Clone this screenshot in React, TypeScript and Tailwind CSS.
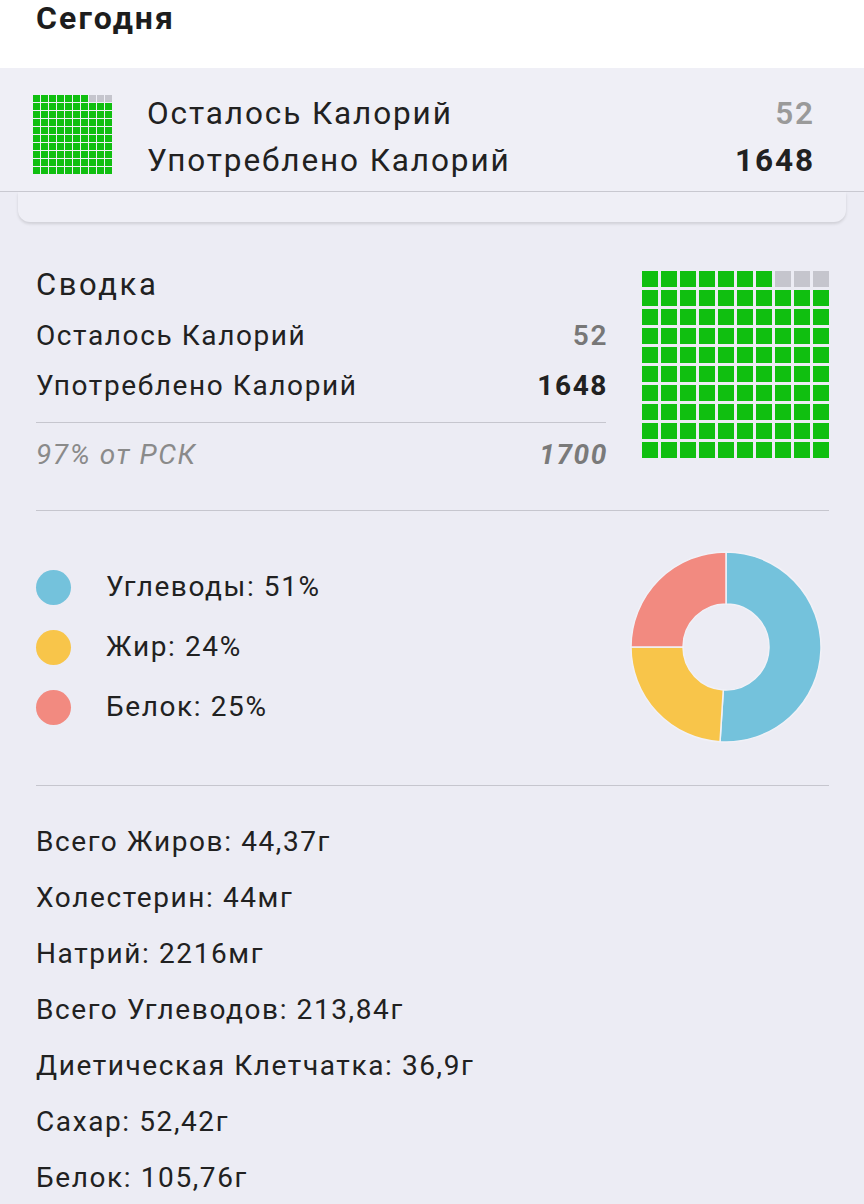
import React from "react";

const GREEN = "#10bf10";
const GRAYCELL = "#c5c5cd";

function Waffle({ cell, gap }: { cell: number; gap: number }) {
  const cells = [];
  for (let r = 0; r < 10; r++) {
    for (let c = 0; c < 10; c++) {
      const gray = r === 0 && c >= 7;
      cells.push(
        <div
          key={r * 10 + c}
          style={{ width: cell, height: cell, background: gray ? GRAYCELL : GREEN }}
        />
      );
    }
  }
  return (
    <div
      className="grid shrink-0"
      style={{ gridTemplateColumns: `repeat(10, ${cell}px)`, gap }}
    >
      {cells}
    </div>
  );
}

function arcPath(cx: number, cy: number, R: number, r: number, a0: number, a1: number) {
  const rad = (a: number) => ((a - 90) * Math.PI) / 180;
  const p = (rr: number, a: number) => [cx + rr * Math.cos(rad(a)), cy + rr * Math.sin(rad(a))];
  const large = a1 - a0 > 180 ? 1 : 0;
  const [x0, y0] = p(R, a0);
  const [x1, y1] = p(R, a1);
  const [x2, y2] = p(r, a1);
  const [x3, y3] = p(r, a0);
  return `M${x0} ${y0} A${R} ${R} 0 ${large} 1 ${x1} ${y1} L${x2} ${y2} A${r} ${r} 0 ${large} 0 ${x3} ${y3} Z`;
}

function Donut() {
  const segs = [
    { v: 51, c: "#74c2dc" },
    { v: 24, c: "#f8c54a" },
    { v: 25, c: "#f28a80" },
  ];
  let a = 0;
  return (
    <svg width="192" height="192" viewBox="0 0 192 192" className="shrink-0">
      {segs.map((s, i) => {
        const a0 = a;
        const a1 = a + (s.v / 100) * 360;
        a = a1;
        return (
          <path
            key={i}
            d={arcPath(96, 96, 95, 43, a0, a1)}
            fill={s.c}
            stroke="#f1f1f7"
            strokeWidth="1.5"
          />
        );
      })}
    </svg>
  );
}

export default function App() {
  const font = { fontFamily: "Roboto, 'Noto Sans', sans-serif" };
  return (
    <div
      className="w-[864px] min-h-[1204px] bg-[#ececf4] text-[#212121] tracking-[1.6px]"
      style={font}
    >
      <div className="h-[68px] bg-white px-[36px]">
        <div className="text-[32px] font-bold leading-[37px] text-[#1d1d1d] tracking-[2.1px]">
          Сегодня
        </div>
      </div>

      <div className="h-[124px] bg-[#efeff6] border-b border-[#c9c9d1] flex items-start pl-[33px] pr-[49px]">
        <div className="mt-[27px]">
          <Waffle cell={7} gap={1} />
        </div>
        <div className="flex-1 ml-[35px] mt-[22px] text-[31.5px] tracking-[1.9px]">
          <div className="flex justify-between leading-[47px]">
            <span>Осталось Калорий</span>
            <span className="font-semibold text-[#9a9a9a]">52</span>
          </div>
          <div className="flex justify-between leading-[47px]">
            <span>Употреблено Калорий</span>
            <span className="font-bold">1648</span>
          </div>
        </div>
      </div>
      <div className="mx-[18px] h-[30px] rounded-b-[12px] bg-[#efeff6] shadow-[0_2px_3px_rgba(0,0,0,0.12)]" />

      <div className="flex items-start pr-[35px] pl-[36px] pt-[46px]">
        <div className="flex-1 mr-[36px]">
          <div className="text-[31px] leading-[34px] tracking-[2.6px]">Сводка</div>
          <div className="mt-[9px] flex justify-between text-[28px] leading-[50px]">
            <span>Осталось Калорий</span>
            <span className="font-semibold text-[#777] -mr-[2px]">52</span>
          </div>
          <div className="flex justify-between text-[28px] leading-[50px]">
            <span>Употреблено Калорий</span>
            <span className="font-bold -mr-[2px]">1648</span>
          </div>
          <div className="mt-[11px] h-[1px] bg-[#c6c6ce]" />
          <div className="mt-[7px] flex justify-between text-[28px] leading-[50px] italic text-[#8a8a8a]">
            <span>97% от РСК</span>
            <span className="font-bold text-[#7a7a7a] -mr-[2px]">1700</span>
          </div>
        </div>
        <div className="mt-[3px]">
          <Waffle cell={16} gap={3} />
        </div>
      </div>

      <div className="mx-[36px] mt-[30px] h-[1px] bg-[#c6c6ce] w-[793px]" />

      <div className="flex justify-between items-start pl-[36px] pr-[42px] mt-[40px]">
        <div className="pt-[6px] text-[28px]">
          {[
            { c: "#74c2dc", t: "Углеводы: 51%" },
            { c: "#f8c54a", t: "Жир: 24%" },
            { c: "#f28a80", t: "Белок: 25%" },
          ].map((l) => (
            <div key={l.t} className="h-[60px] flex items-center">
              <div className="w-[35px] h-[35px] rounded-full" style={{ background: l.c }} />
              <span className="ml-[35px]">{l.t}</span>
            </div>
          ))}
        </div>
        <Donut />
      </div>

      <div className="mx-[36px] mt-[42px] h-[1px] bg-[#c6c6ce] w-[793px]" />

      <div className="px-[36px] mt-[28px] text-[28px]">
        {[
          "Всего Жиров: 44,37г",
          "Холестерин: 44мг",
          "Натрий: 2216мг",
          "Всего Углеводов: 213,84г",
          "Диетическая Клетчатка: 36,9г",
          "Сахар: 52,42г",
          "Белок: 105,76г",
        ].map((t) => (
          <div key={t} className="leading-[56px]">
            {t}
          </div>
        ))}
      </div>
    </div>
  );
}
